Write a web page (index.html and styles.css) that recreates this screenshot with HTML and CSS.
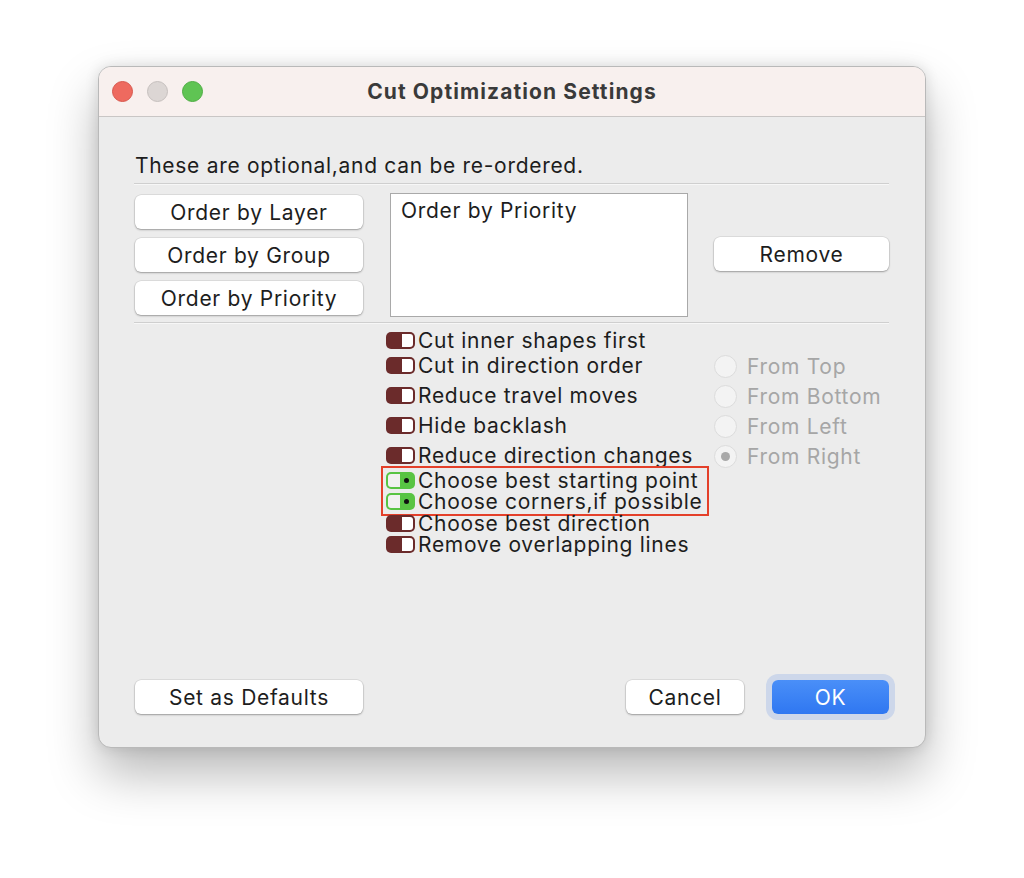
FILE: index.html
```html
<!DOCTYPE html>
<html lang="en">
<head>
    <meta charset="UTF-8">
    <meta name="viewport" content="width=device-width, initial-scale=1.0">
    <title>Cut Optimization Settings</title>
    <link rel="stylesheet" href="styles.css">
</head>
<body>
    <div class="window">
        <div class="titlebar">
            <div class="lights">
                <span class="light close"></span>
                <span class="light mini"></span>
                <span class="light zoom"></span>
            </div>
            <h1>Cut Optimization Settings</h1>
        </div>

        <div class="content">
            <p class="intro">These are optional,and can be re-ordered.</p>
            <div class="divider"></div>

            <div class="order-row">
                <div class="order-buttons">
                    <button class="btn">Order by Layer</button>
                    <button class="btn">Order by Group</button>
                    <button class="btn">Order by Priority</button>
                </div>
                <div class="order-list">
                    <div class="list-item">Order by Priority</div>
                </div>
                <button class="btn remove-btn">Remove</button>
            </div>
            <div class="divider"></div>

            <div class="options">
                <div class="toggles">
                    <label class="option"><span class="toggle"></span>Cut inner shapes first</label>
                    <label class="option gap-s"><span class="toggle"></span>Cut in direction order</label>
                    <label class="option gap-l"><span class="toggle"></span>Reduce travel moves</label>
                    <label class="option gap-l"><span class="toggle"></span>Hide backlash</label>
                    <label class="option gap-l"><span class="toggle"></span>Reduce direction changes</label>
                    <div class="highlight">
                        <label class="option"><span class="toggle on"></span>Choose best starting point</label>
                        <label class="option"><span class="toggle on"></span>Choose corners,if possible</label>
                    </div>
                    <label class="option tight"><span class="toggle"></span>Choose best direction</label>
                    <label class="option"><span class="toggle"></span>Remove overlapping lines</label>
                </div>
                <div class="radios">
                    <label class="radio"><span class="dot"></span>From Top</label>
                    <label class="radio"><span class="dot"></span>From Bottom</label>
                    <label class="radio"><span class="dot"></span>From Left</label>
                    <label class="radio"><span class="dot checked"></span>From Right</label>
                </div>
            </div>

            <div class="footer">
                <button class="btn">Set as Defaults</button>
                <div class="footer-right">
                    <button class="btn cancel-btn">Cancel</button>
                    <button class="btn ok-btn">OK</button>
                </div>
            </div>
        </div>
    </div>
</body>
</html>
```

FILE: styles.css
```css
* {
    margin: 0;
    padding: 0;
    box-sizing: border-box;
    font-family: Inter, "Liberation Sans", sans-serif;
}

body {
    background-color: #fff;
    width: 1024px;
    height: 878px;
    overflow: hidden;
}

.window {
    width: 828px;
    height: 682px;
    margin: 66px 0 0 98px;
    background-color: #ececec;
    border: 1px solid #b9b9b9;
    border-radius: 13px;
    box-shadow: 0 26px 50px rgba(0, 0, 0, 0.28), 0 0 14px rgba(0, 0, 0, 0.12);
    display: flex;
    flex-direction: column;
    overflow: hidden;
}

/* title bar */
.titlebar {
    height: 50px;
    flex-shrink: 0;
    background-color: #f8f0ee;
    border-bottom: 1px solid #c9c6c5;
    display: flex;
    align-items: center;
    position: relative;
}

.lights {
    display: flex;
    gap: 14px;
    padding-left: 13px;
}

.light {
    width: 21px;
    height: 21px;
    border-radius: 50%;
    display: block;
}

.light.close {
    background-color: #ee6a5f;
    border: 1px solid #d8574d;
}

.light.mini {
    background-color: #dcd6d4;
    border: 1px solid #c6c0be;
}

.light.zoom {
    background-color: #5fc453;
    border: 1px solid #4ead43;
}

.titlebar h1 {
    position: absolute;
    left: 0;
    right: 0;
    text-align: center;
    font-size: 21px;
    font-weight: 700;
    letter-spacing: 1.1px;
    color: #3a3a3a;
}

/* body */
.content {
    flex: 1;
    padding: 35px 36px 33px 35px;
    display: flex;
    flex-direction: column;
    color: #1d1d1d;
    font-size: 21px;
    letter-spacing: 0.7px;
}

.intro {
    line-height: 25px;
    margin-top: 1px;
    padding-left: 1px;
}

.divider {
    height: 2px;
    border-top: 1px solid #cfcfcf;
    border-bottom: 1px solid #f7f7f7;
    margin-top: 5px;
}

.btn {
    font-size: 21px;
    letter-spacing: 0.7px;
    color: #1d1d1d;
    background-color: #fff;
    border: none;
    border-radius: 6px;
    box-shadow: 0 0 0 0.5px rgba(0, 0, 0, 0.12), 0 1px 2px rgba(0, 0, 0, 0.3);
    height: 34px;
    cursor: pointer;
}

.order-row {
    display: flex;
    align-items: flex-start;
    padding: 8px 0 0 1px;
}

.order-buttons {
    display: flex;
    flex-direction: column;
    gap: 9px;
    width: 228px;
    padding-top: 2px;
}

.order-list {
    width: 298px;
    height: 124px;
    margin-left: 27px;
    background-color: #fff;
    border: 1px solid #a9a9a9;
    padding: 5px 10px;
}

.list-item {
    line-height: 24px;
}

.remove-btn {
    width: 175px;
    margin: 44px 0 0 26px;
}

/* options */
.options {
    display: flex;
    align-items: flex-start;
    padding-left: 252px;
    margin-top: 6px;
}

.toggles {
    display: flex;
    flex-direction: column;
    width: 328px;
}

.option {
    display: flex;
    align-items: center;
    height: 21px;
    line-height: 21px;
    white-space: nowrap;
}

.option.gap-s {
    margin-top: 4px;
}

.option.gap-l {
    margin-top: 9px;
}

.option.tight {
    margin-top: -3px;
}

.toggle {
    width: 29px;
    height: 17px;
    margin-right: 3px;
    border-radius: 5px;
    background-color: #6b2b2b;
    position: relative;
    flex-shrink: 0;
}

.toggle::after {
    content: "";
    position: absolute;
    right: 2px;
    top: 2px;
    width: 11px;
    height: 13px;
    border-radius: 0 3px 3px 0;
    background-color: #fff;
}

.toggle.on {
    background-color: #58c443;
}

.toggle.on::after {
    left: 2px;
    right: auto;
    width: 12px;
    border-radius: 3px 0 0 3px;
    background-color: #f1f1f1;
}

.toggle.on::before {
    content: "";
    position: absolute;
    right: 6px;
    top: 6px;
    width: 5px;
    height: 5px;
    border-radius: 50%;
    background-color: #111;
}

.highlight {
    border: 2px solid #e4402a;
    margin: 0 0 0 -5px;
    padding: 2px 0 2px 3px;
    width: 328px;
}

.radios {
    display: flex;
    flex-direction: column;
    gap: 8px;
    padding-top: 25px;
    color: #a6a6a6;
}

.radio {
    display: flex;
    align-items: center;
    height: 22px;
    white-space: nowrap;
}

.dot {
    width: 23px;
    height: 23px;
    border-radius: 50%;
    background-color: #f3f3f3;
    border: 1px solid #dcdcdc;
    margin-right: 10px;
    position: relative;
}

.dot.checked::after {
    content: "";
    position: absolute;
    left: 6px;
    top: 6px;
    width: 9px;
    height: 9px;
    border-radius: 50%;
    background-color: #a9a9a9;
}

/* footer */
.footer {
    margin-top: auto;
    display: flex;
    justify-content: space-between;
    padding-left: 1px;
}

.footer .btn {
    width: 228px;
}

.footer-right {
    display: flex;
    gap: 28px;
}

.footer .cancel-btn {
    width: 118px;
}

.footer .ok-btn {
    width: 117px;
    color: #fff;
    background: linear-gradient(#4a8ff8, #2f77f1);
    box-shadow: 0 0 0 6px #cdd7ea;
}
```
